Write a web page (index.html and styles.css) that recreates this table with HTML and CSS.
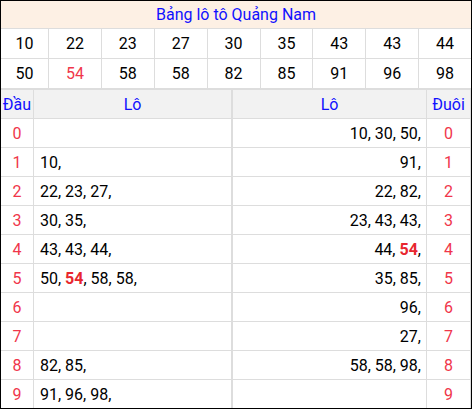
FILE: index.html
```html
<!DOCTYPE html>
<html lang="vi">
<head>
<meta charset="utf-8">
<title>Bảng lô tô Quảng Nam</title>
<link rel="stylesheet" href="styles.css">
</head>
<body>
<div class="board">
  <div class="title">Bảng lô tô Quảng Nam</div>
  <div class="nums">
    <div class="n">10</div><div class="n">22</div><div class="n">23</div><div class="n">27</div><div class="n">30</div><div class="n">35</div><div class="n">43</div><div class="n">43</div><div class="n">44</div>
    <div class="n">50</div><div class="n red">54</div><div class="n">58</div><div class="n">58</div><div class="n">82</div><div class="n">85</div><div class="n">91</div><div class="n">96</div><div class="n">98</div>
  </div>
  <div class="lo">
    <div class="h">Đầu</div><div class="h">Lô</div><div class="h">Lô</div><div class="h">Đuôi</div>

    <div class="d">0</div><div class="l"></div><div class="r"><span>10, 30, 50,</span></div><div class="d">0</div>
    <div class="d">1</div><div class="l"><span>10,</span></div><div class="r"><span>91,</span></div><div class="d">1</div>
    <div class="d">2</div><div class="l"><span>22, 23, 27,</span></div><div class="r"><span>22, 82,</span></div><div class="d">2</div>
    <div class="d">3</div><div class="l"><span>30, 35,</span></div><div class="r"><span>23, 43, 43,</span></div><div class="d">3</div>
    <div class="d">4</div><div class="l"><span>43, 43, 44,</span></div><div class="r"><span>44, <b class="hot">54</b>,</span></div><div class="d">4</div>
    <div class="d">5</div><div class="l"><span>50, <b class="hot">54</b>, 58, 58,</span></div><div class="r"><span>35, 85,</span></div><div class="d">5</div>
    <div class="d">6</div><div class="l"></div><div class="r"><span>96,</span></div><div class="d">6</div>
    <div class="d">7</div><div class="l"></div><div class="r"><span>27,</span></div><div class="d">7</div>
    <div class="d">8</div><div class="l"><span>82, 85,</span></div><div class="r"><span>58, 58, 98,</span></div><div class="d">8</div>
    <div class="d">9</div><div class="l"><span>91, 96, 98,</span></div><div class="r"></div><div class="d">9</div>
  </div>
</div>
</body>
</html>
```

FILE: styles.css
```css
html, body {
  margin: 0;
  padding: 0;
  background: #fff;
}

body {
  font-family: Roboto, "Liberation Sans", Arial, sans-serif;
  font-size: 16px;
  color: #000;
}

.board {
  width: 472px;
  box-sizing: border-box;
  border: 1px solid #000;
  background: #dddddd;
}

.title {
  height: 27px;
  line-height: 27px;
  text-align: center;
  background: #fdf0e4;
  color: #1010ff;
  margin-bottom: 1px;
}

.nums {
  display: grid;
  grid-template-columns: 47px repeat(8, 1fr);
  grid-auto-rows: 29px;
  gap: 1px;
  margin-bottom: 2px;
}

.n {
  background: #fff;
  display: flex;
  align-items: center;
  justify-content: center;
}

.red {
  color: #f0364a;
}

.lo {
  display: grid;
  grid-template-columns: 32px 198px 193px 43px;
  grid-template-rows: 28px;
  grid-auto-rows: 28px;
  column-gap: 1px;
  row-gap: 1px;
}

.lo > div:nth-child(4n+2) {
  margin-right: 1px;
}

.h {
  background: #f2f2f2;
  color: #1010ff;
  display: flex;
  align-items: center;
  justify-content: center;
  white-space: nowrap;
}

.d {
  background: #fff;
  color: #f0364a;
  display: flex;
  align-items: center;
  justify-content: center;
}

.l, .r {
  background: #fff;
  display: flex;
  align-items: center;
  white-space: nowrap;
}

.l {
  padding-left: 6px;
}

.r {
  justify-content: flex-end;
  padding-right: 5px;
}

.hot {
  color: #e8262e;
  font-weight: bold;
}
```
